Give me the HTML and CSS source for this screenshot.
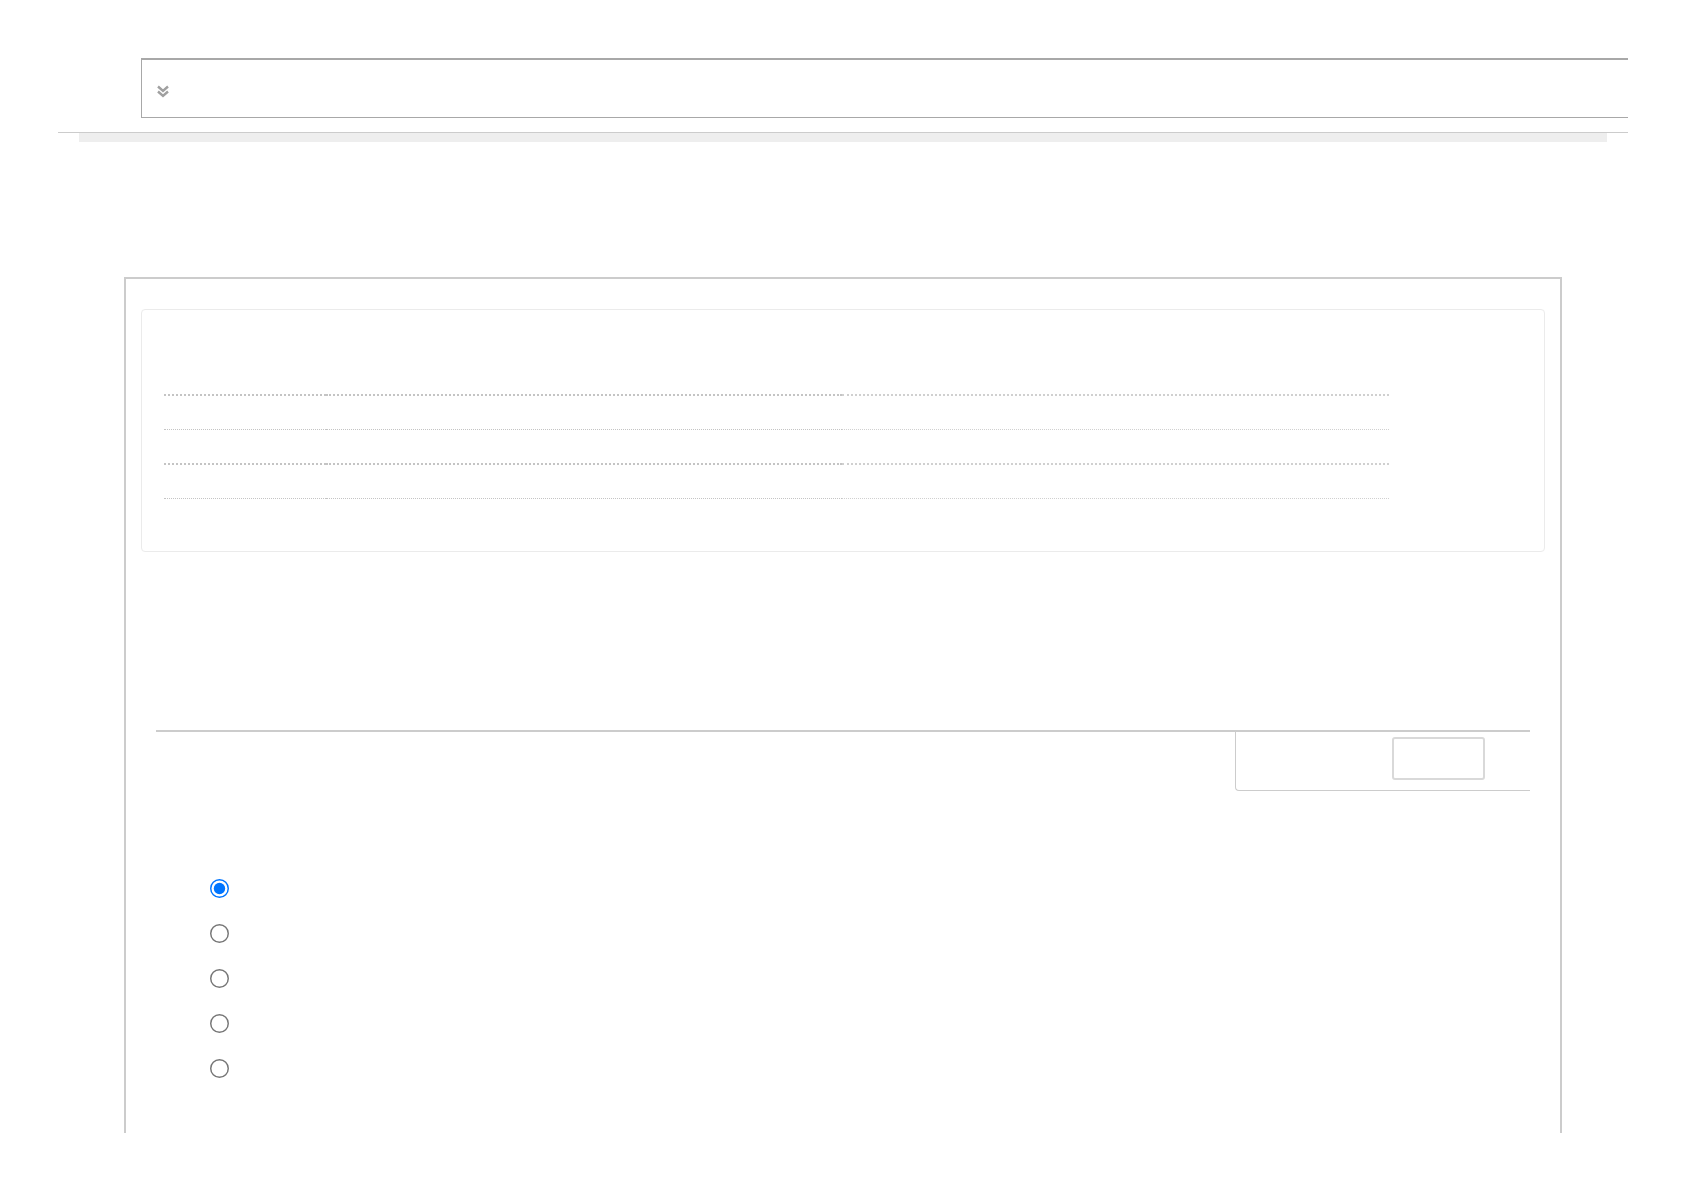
FILE: index.html
```html
<!DOCTYPE html>
<html lang="en">
<head>
<meta charset="utf-8">
<title>Form</title>
<link rel="stylesheet" href="styles.css">
</head>
<body>
<div class="page">
  <header class="toolbar">
    <button class="toggle" type="button" aria-label="Expand">
      <svg width="14" height="13" viewBox="0 0 14 13" aria-hidden="true">
        <path d="M2 1.5 L7 6 L12 1.5 M2 6.5 L7 11 L12 6.5" fill="none" stroke="#a0a0a0" stroke-width="2.4"/>
      </svg>
    </button>
  </header>
  <div class="divider"><div class="divider-bar"></div></div>

  <main class="panel">
    <section class="card">
      <div class="table">
        <div class="row row-thick"><div class="cell c1"></div><div class="cell c2"></div><div class="cell c3"></div></div>
        <div class="row row-thin"><div class="cell c1"></div><div class="cell c2"></div><div class="cell c3"></div></div>
        <div class="row row-thick"><div class="cell c1"></div><div class="cell c2"></div><div class="cell c3"></div></div>
        <div class="row row-thin"><div class="cell c1"></div><div class="cell c2"></div><div class="cell c3"></div></div>
      </div>
    </section>

    <div class="tabs">
      <div class="tab-box">
        <div class="tab-button"></div>
      </div>
    </div>

    <div class="options">
      <input class="opt" type="radio" name="opt" checked>
      <input class="opt" type="radio" name="opt">
      <input class="opt" type="radio" name="opt">
      <input class="opt" type="radio" name="opt">
      <input class="opt" type="radio" name="opt">
    </div>
  </main>
</div>
</body>
</html>
```

FILE: styles.css
```css
* { box-sizing: border-box; }

html, body {
  margin: 0;
  padding: 0;
  background: #ffffff;
  font-family: "Liberation Sans", Arial, sans-serif;
}

.page {
  width: 1684px;
  height: 1190px;
  overflow: hidden;
  padding-top: 58px;
}

.toolbar {
  margin-left: 141px;
  width: 1487px;
  height: 60px;
  border-top: 2px solid #a8a8a8;
  border-left: 1px solid #a8a8a8;
  border-bottom: 1px solid #a8a8a8;
  display: flex;
  align-items: flex-start;
  padding: 25px 0 0 14px;
}

.toggle {
  border: 0;
  padding: 0;
  margin: 0;
  background: none;
  display: block;
  width: 14px;
  height: 13px;
}

.toggle svg { display: block; }

.divider {
  margin-top: 14px;
  margin-left: 58px;
  width: 1570px;
  border-top: 1px solid #cccccc;
}

.divider-bar {
  margin-left: 21px;
  width: 1528px;
  height: 9px;
  background: #eeeeee;
}

.panel {
  margin-top: 135px;
  margin-left: 124px;
  width: 1438px;
  height: 856px;
  border: 2px solid #cccccc;
  border-bottom: 0;
  padding: 30px 15px 0 15px;
}

.card {
  width: 1404px;
  height: 243px;
  border: 1px solid #ebebeb;
  border-radius: 4px;
  padding: 51px 0 0 22px;
}

.table {
  width: 1225px;
  display: flex;
  flex-direction: column;
}

.row {
  display: flex;
}

.cell {
  height: 35px;
}

.c1 { width: 162px; }
.c2 { width: 516px; }
.c3 { width: 547px; }

.row-thick .c1,
.row-thick .c2 {
  border-bottom: 2px dotted #c4c4c4;
}

.row-thin .c1,
.row-thin .c2 {
  height: 34px;
  border-bottom: 1px dotted #c4c4c4;
}

.row-thick .c3 {
  border-bottom: 2px dotted #d0d0d0;
}

.row-thin .c3 {
  height: 34px;
  border-bottom: 1px dotted #d0d0d0;
}

.tabs {
  margin-top: 178px;
  margin-left: 15px;
  width: 1374px;
  border-top: 2px solid #cccccc;
  display: flex;
  justify-content: flex-end;
}

.tab-box {
  width: 295px;
  height: 59px;
  border-left: 1px solid #cccccc;
  border-bottom: 1px solid #cccccc;
  border-bottom-left-radius: 4px;
  display: flex;
  justify-content: flex-end;
  padding: 5px 45px 0 0;
}

.tab-button {
  width: 93px;
  height: 43px;
  border: 2px solid #d9d9d9;
  border-radius: 3px;
  background: #ffffff;
}

.options {
  margin-top: 88px;
  padding-left: 69px;
  display: flex;
  flex-direction: column;
  align-items: flex-start;
  gap: 26px;
}

.opt {
  margin: 0;
  width: 13px;
  height: 13px;
  zoom: 1.46;
  accent-color: #0075ff;
}
```
